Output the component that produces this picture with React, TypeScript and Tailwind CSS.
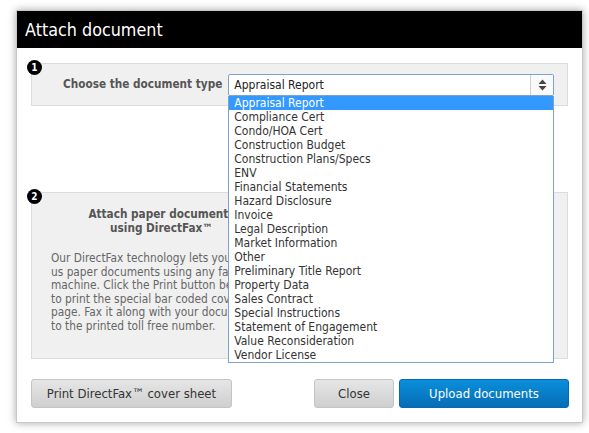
import React from "react";

const items = [
  "Appraisal Report",
  "Compliance Cert",
  "Condo/HOA Cert",
  "Construction Budget",
  "Construction Plans/Specs",
  "ENV",
  "Financial Statements",
  "Hazard Disclosure",
  "Invoice",
  "Legal Description",
  "Market Information",
  "Other",
  "Preliminary Title Report",
  "Property Data",
  "Sales Contract",
  "Special Instructions",
  "Statement of Engagement",
  "Value Reconsideration",
  "Vendor License",
];

function Badge({ n }: { n: string }) {
  return (
    <div className="absolute left-[-5px] top-[-4px] w-[15px] h-[15px] rounded-full bg-black text-white flex items-center justify-center text-[10px] font-bold leading-none z-10">
      {n}
    </div>
  );
}

export default function App() {
  return (
    <div
      className="w-[589px] h-[433px] bg-white pt-[10px] pl-[16px]"
      style={{ fontFamily: '"DejaVu Sans Condensed", "DejaVu Sans", Verdana, sans-serif' }}
    >
      <div className="w-[567px] h-[413px] bg-white border border-[#c8c8c8] shadow-[0_0_8px_rgba(0,0,0,0.35)] flex flex-col">
        <div className="h-[37px] bg-black text-white text-[17.8px] flex items-center pl-[8px] pt-[1px]">
          Attach document
        </div>
        <div className="flex-1 px-[14px] pt-[15px] flex flex-col">
          <div className="relative h-[43px] bg-[#f0f0f0] border border-[#dcdcdc] flex items-center pl-[31px]">
            <Badge n="1" />
            <span className="text-[11.7px] font-bold text-[#555] mr-[6px]">Choose the document type</span>
            <div className="relative w-[326px] h-[22px] bg-white border border-[#7da2ce] rounded-[2px] flex items-center">
              <span className="flex-1 pl-[5px] text-[12px] text-[#222]">Appraisal Report</span>
              <div className="w-[23px] h-full border-l border-[#d0d0d0] flex items-center justify-center bg-[#fafafa]">
                <svg width="9" height="12" viewBox="0 0 9 12">
                  <path d="M4.5 0.5 L8.5 5 L0.5 5 Z" fill="#444" />
                  <path d="M4.5 11.5 L8.5 7 L0.5 7 Z" fill="#444" />
                </svg>
              </div>
              <div className="absolute left-[-1px] top-[21px] w-[326px] bg-white border border-[#7da2ce] border-t-0 z-20">
                {items.map((it, i) => (
                  <div
                    key={it}
                    className={
                      "h-[14px] leading-[14px] pl-[5px] text-[12px] " +
                      (i === 0 ? "bg-[#3399ff] text-white" : "text-[#333]")
                    }
                  >
                    {it}
                  </div>
                ))}
              </div>
            </div>
          </div>

          <div className="relative mt-[86px] h-[167px] bg-[#f0f0f0] border border-[#dcdcdc] flex">
            <Badge n="2" />
            <div className="w-[196px] overflow-hidden">
              <div className="w-[240px] pl-[19px] pt-[14px]">
                <div className="text-[11.7px] font-bold text-[#555] text-center leading-[14px]">
                  Attach paper documents
                  <br />
                  using DirectFax™
                </div>
                <div className="mt-[17px] text-[11.8px] text-[#666] leading-[13.5px] whitespace-nowrap">
                  Our DirectFax technology lets you send
                  <br />
                  us paper documents using any fax
                  <br />
                  machine. Click the Print button below
                  <br />
                  to print the special bar coded cover
                  <br />
                  page. Fax it along with your documents
                  <br />
                  to the printed toll free number.
                </div>
              </div>
            </div>
          </div>

          <div className="mt-[20px] flex items-center">
            <button className="w-[201px] h-[29px] rounded-[3px] bg-gradient-to-b from-[#e6e6e6] to-[#cfcfcf] text-[13px] text-[#333] border border-[#c4c4c4]">
              Print DirectFax™ cover sheet
            </button>
            <div className="flex-1" />
            <button className="w-[80px] h-[29px] rounded-[3px] bg-gradient-to-b from-[#e6e6e6] to-[#cfcfcf] text-[13px] text-[#333] border border-[#c4c4c4] mr-[5px]">
              Close
            </button>
            <button className="w-[170px] h-[29px] rounded-[3px] bg-gradient-to-b from-[#0a8fdc] to-[#066db5] text-[13px] text-white border border-[#0769b0] mr-[-1px]">
              Upload documents
            </button>
          </div>
        </div>
      </div>
    </div>
  );
}
